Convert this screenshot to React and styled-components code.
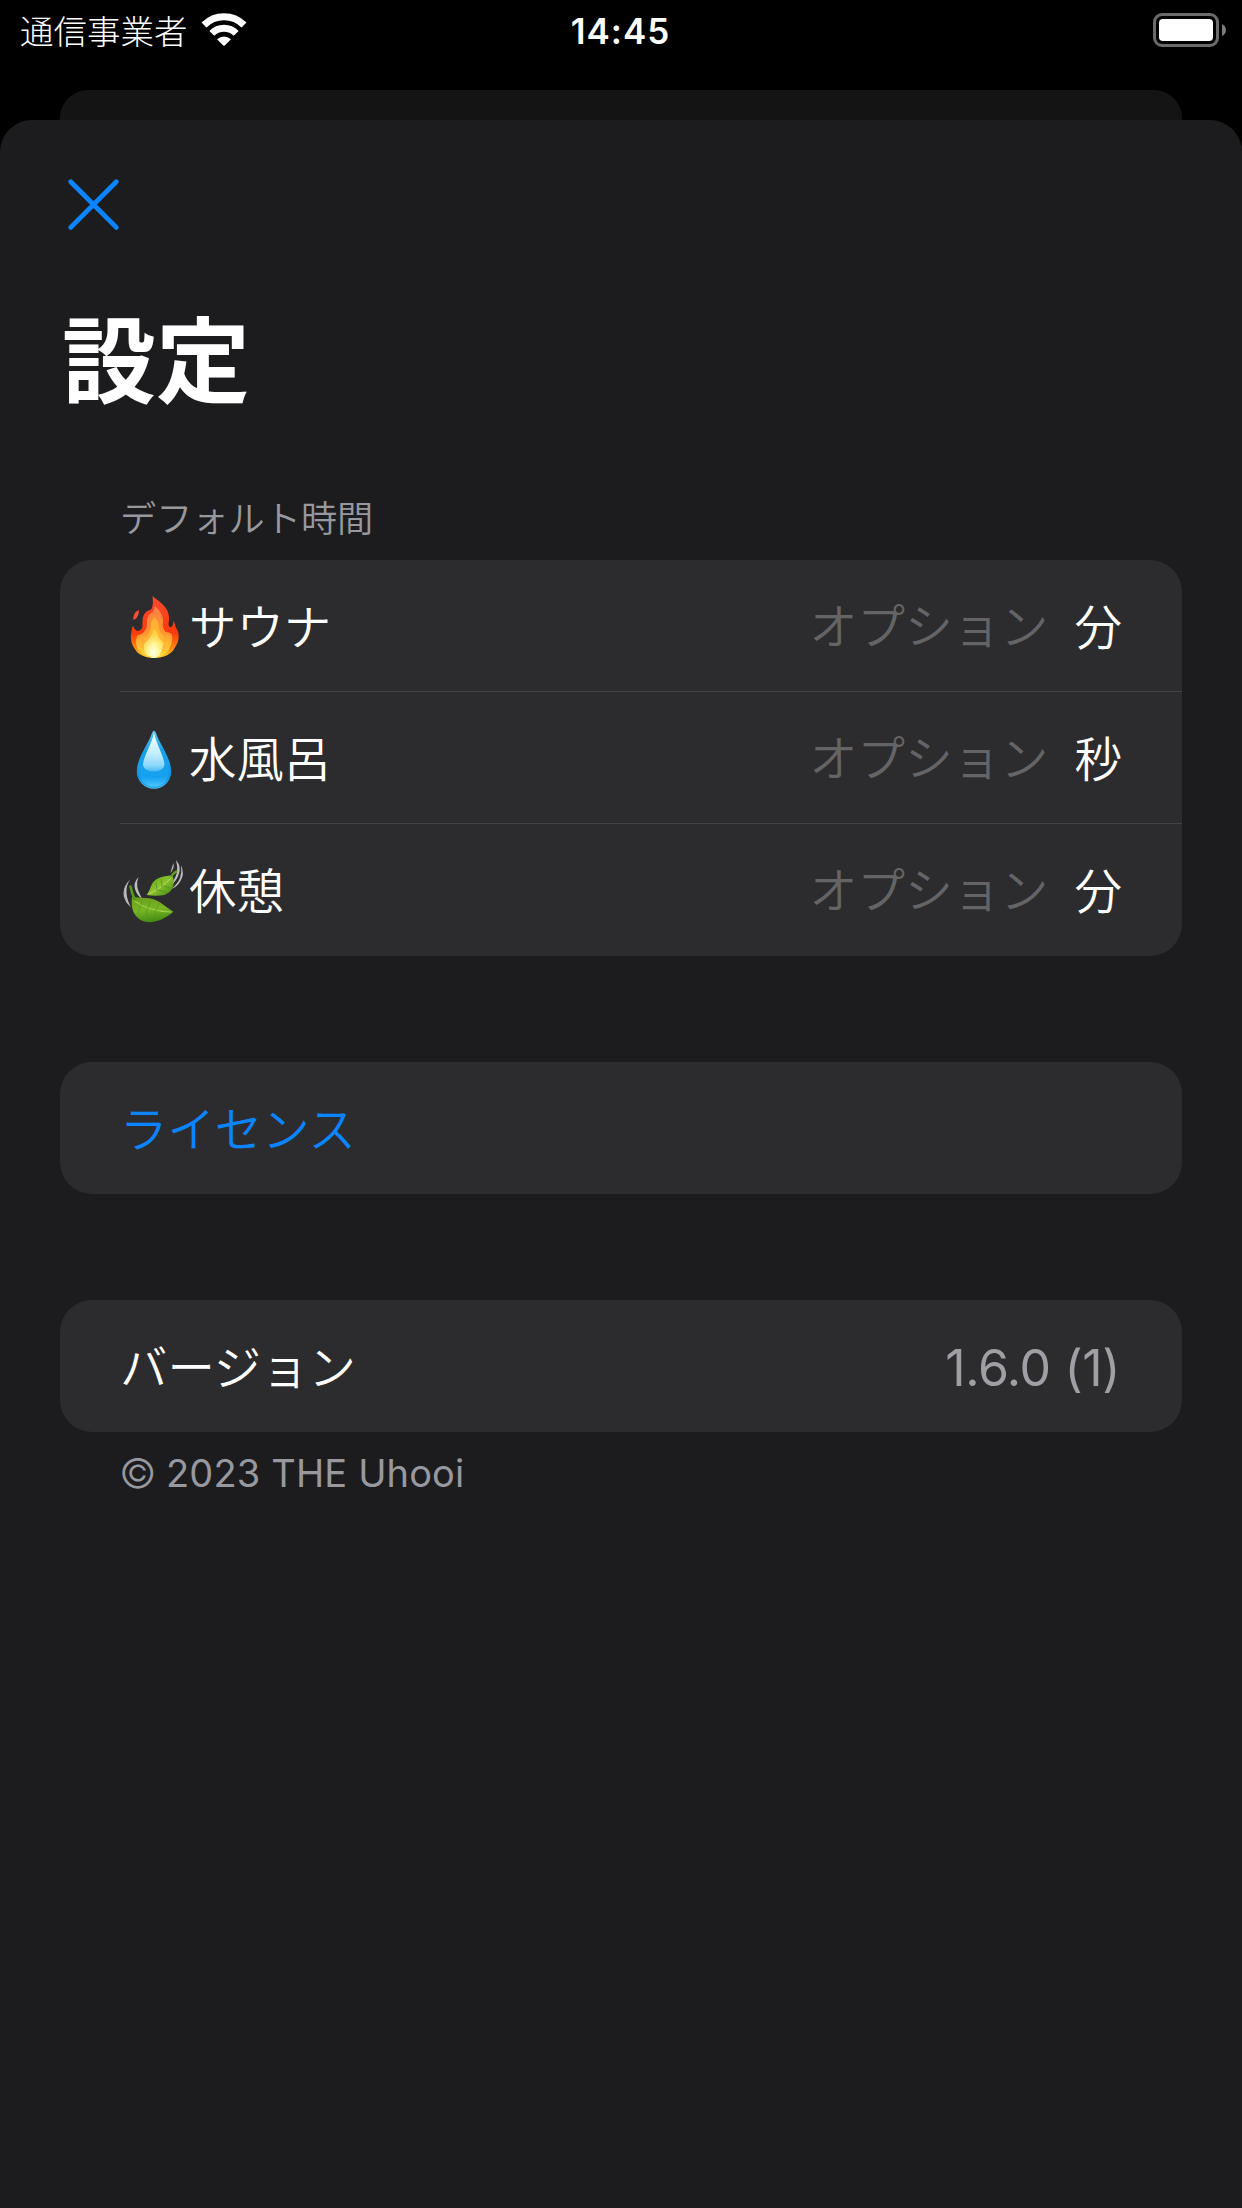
import React from "react";
import styled, { createGlobalStyle } from "styled-components";

const jp = `"Noto Sans CJK JP", sans-serif`;
const latin = `Inter, "Noto Sans CJK JP", sans-serif`;

const GlobalStyle = createGlobalStyle`
  *, *::before, *::after { box-sizing: border-box; }
  html, body { margin: 0; background: #000; }
  body { font-family: ${jp}; color: #fff; font-weight: 350; }
`;

const Screen = styled.div`
  display: flex;
  flex-direction: column;
  width: 1242px;
  height: 2208px;
  overflow: hidden;
  background: #000;
`;

const StatusBar = styled.header`
  display: grid;
  grid-template-columns: 1fr auto 1fr;
  align-items: center;
  height: 60px;
  padding: 0 16px 0 20px;
`;

const Carrier = styled.div`
  display: flex;
  align-items: center;
  gap: 13px;
  font-size: 33.5px;
  font-weight: 300;
  line-height: 60px;
  white-space: nowrap;
`;

const Clock = styled.time`
  padding: 3px 5px 0 0;
  font-family: ${latin};
  font-size: 35px;
  font-weight: 600;
  line-height: 57px;
  letter-spacing: 1px;
`;

const BatterySlot = styled.div`
  display: flex;
  justify-content: flex-end;
`;

const BackSheet = styled.div`
  height: 30px;
  margin: 30px 60px 0;
  border-radius: 28px 28px 0 0;
  background: #141414;
`;

const Sheet = styled.main`
  flex: 1;
  display: flex;
  flex-direction: column;
  padding: 56px 60px 0;
  border-radius: 32px 32px 0 0;
  background: #1c1c1e;
`;

const CloseButton = styled.button`
  display: flex;
  width: 67px;
  height: 57px;
  padding: 0;
  border: 0;
  background: none;
  color: #0a84ff;
`;

const Title = styled.h1`
  margin: 55px 0 0;
  padding-left: 2px;
  font-size: 94px;
  font-weight: 700;
  line-height: 134px;
`;

const SectionHeader = styled.h2`
  margin: 69px 0 0;
  padding: 0 60px;
  height: 69px;
  font-size: 36.2px;
  font-weight: 350;
  line-height: 50px;
  color: #98989f;
`;

const Card = styled.section`
  border-radius: 32px;
  background: #2c2c2e;
  overflow: hidden;
  margin-top: ${(p) => p.$gap || 0}px;
`;

const Row = styled.div`
  display: flex;
  align-items: center;
  height: 132px;
  margin-left: 60px;
  padding-right: 60px;
  border-bottom: ${(p) => (p.$divided ? "1px solid #434346" : "0")};
`;

const Label = styled.span`
  flex: 1;
  font-size: 47.4px;
  line-height: 128px;
  padding-bottom: 2px;
  color: ${(p) => (p.$link ? "#0a84ff" : "#fff")};
`;

const Placeholder = styled.span`
  margin-right: 26px;
  padding-bottom: 4px;
  font-size: 47.8px;
  line-height: 128px;
  color: #646467;
`;

const Unit = styled.span`
  padding-bottom: 2px;
  font-size: 47.6px;
  line-height: 128px;
`;

const Version = styled.span`
  padding: 3px 2px 0 0;
  font-family: ${latin};
  font-size: 50px;
  font-weight: 400;
  line-height: 128px;
  letter-spacing: -0.4px;
  color: #9f9fa6;
`;

const Footer = styled.footer`
  display: flex;
  align-items: center;
  gap: 13px;
  padding: 16px 60px 0;
  font-family: ${latin};
  font-size: 38px;
  font-weight: 400;
  line-height: 50px;
  letter-spacing: 0.15px;
  color: #98989f;
`;

const CopyrightMark = styled.span`
  width: 33px;
  font-size: 41px;
  font-weight: 300;
  text-indent: -1px;
  white-space: nowrap;
`;

const Emoji = styled.svg`
  flex: none;
  width: 69px;
  height: 68px;
`;

const Wifi = () => (
  <svg width="46" height="34" viewBox="201 13 46 34" fill="none" stroke="#fff">
    <path d="M204 25A28.3 28.3 0 0 1 244 25" strokeWidth="7" />
    <path d="M211.8 33.4A17.2 17.2 0 0 1 236.200 33.4" strokeWidth="7" />
    <path d="M217 39.300Q224 33.500 231 39.300L225 45.300Q224 46.300 223 45.300Z" fill="#fff" stroke="none" />
  </svg>
);

const Battery = () => (
  <svg width="73" height="34" viewBox="0 0 73 34">
    <rect x="1.500" y="1.500" width="63" height="31" rx="7.500" fill="none" stroke="#6b6b6b" strokeWidth="3" />
    <rect x="6" y="6" width="54" height="22" rx="4" fill="#fff" />
    <path d="M69 11Q73 13 73 17T69 23Z" fill="#7c7c7c" />
  </svg>
);

const CloseIcon = () => (
  <svg width="67" height="57" viewBox="0 0 67 57" fill="none" stroke="currentColor" strokeWidth="4.800" strokeLinecap="round">
    <path d="M10.700 5.800L56.300 51.400M56.300 5.800L10.700 51.400" />
  </svg>
);

const Fire = () => (
  <Emoji viewBox="0 0 69 68">
    <defs>
      <linearGradient id="fireOuter" x1="0" y1="0" x2="0" y2="1">
        <stop offset="0" stopColor="#f8492f" />
        <stop offset="0.600" stopColor="#fb3a0c" />
        <stop offset="0.850" stopColor="#fd8a10" />
        <stop offset="1" stopColor="#ffd427" />
      </linearGradient>
      <linearGradient id="fireMid" x1="0" y1="0" x2="0" y2="1">
        <stop offset="0" stopColor="#ff7f45" />
        <stop offset="0.500" stopColor="#ff9330" />
        <stop offset="1" stopColor="#ffe13a" />
      </linearGradient>
      <radialGradient id="fireCore" cx="0.500" cy="0.800" r="0.650">
        <stop offset="0" stopColor="#fffff0" />
        <stop offset="0.400" stopColor="#fff79e" />
        <stop offset="1" stopColor="#ffcf3c" />
      </radialGradient>
    </defs>
    <path fill="url(#fireOuter)" d="M32.500 4C37 8 43 11 47 18C50 24 49 28 48.500 33Q50 36.500 52 34.500Q53.700 32 53.500 29Q55 31 55.500 35C57 37 58.700 40 58.700 44Q58.700 50 55.500 54.500L53.500 58C50 63 42 66 34.500 66C26 66 18 62.500 15.500 58L13.500 55C10.500 50 10.500 44 11.500 39Q12 36 13 33.500Q14 37.500 17 39Q21 39 22.500 35C22.500 30 22 24 25.500 20.500Q27.500 18 30.500 18C33.500 15 33 9 32.500 4Z" />
    <path fill="#f45135" d="M19 18Q15 19.500 14 23Q12.800 25.500 13.800 28Q17.500 26 18.200 23Q19.200 20 19 18Z" />
    <path fill="url(#fireMid)" d="M35 14C39 18 43.500 23 43 29Q42 36 45.500 40Q49 40 51.500 42C54 48 50 57 46 61Q40 65.500 34.500 65.500Q26 65 20 60C15 55 15 47 18 43Q23 43 26.500 36C27.500 31 26 26 30 22Q34 20 35 14Z" />
    <path fill="#ffb332" d="M34.500 25Q39 29 38.500 34Q39 40 43.500 44Q47 52 43 59Q39 65 34 65Q26 64 22.500 56Q21 50 24.500 46Q30 42 31 35Q31 29 34.500 25Z" />
    <path fill="url(#fireCore)" d="M34 37Q38 40 38.500 45Q40 48 43.500 50Q43 58 40 63Q37 66 34.500 66Q29 66 25 61Q23 56 24 52Q31 46 34 37Z" />
  </Emoji>
);

const Drop = () => (
  <Emoji viewBox="0 0 69 68">
    <defs>
      <linearGradient id="dropBody" x1="0" y1="0" x2="0" y2="1">
        <stop offset="0" stopColor="#65c4f2" />
        <stop offset="0.350" stopColor="#17a0e6" />
        <stop offset="0.800" stopColor="#16a1f0" />
        <stop offset="1" stopColor="#55ccff" />
      </linearGradient>
      <linearGradient id="dropShine" x1="0" y1="0" x2="0" y2="1">
        <stop offset="0" stopColor="#f6feff" />
        <stop offset="0.550" stopColor="#c2edff" />
        <stop offset="0.850" stopColor="#8bd7fb" />
        <stop offset="1" stopColor="#48b9f5" />
      </linearGradient>
    </defs>
    <path fill="url(#dropBody)" d="M34 6.700Q35 6.700 36 9C40 21 51.200 34 51.200 47.500A17.200 17.200 0 0 1 16.800 47.500C16.800 34 28 21 32 9Q33 6.700 34 6.700Z" />
    <path fill="url(#dropShine)" d="M34 8.500C36 20 44.500 33 44.500 41Q43 47 34 47.500Q24 47 23 41C23 33 32 20 34 8.500Z" />
    <path fill="none" stroke="#0a86d6" strokeWidth="1.400" opacity="0.500" d="M18 42C16.500 53 23 63.500 34 63.500C45 63.500 51.500 53 50 42" />
  </Emoji>
);

const Leaves = () => (
  <Emoji viewBox="0 0 69 68" fill="none" strokeLinecap="round">
    <defs>
      <linearGradient id="leafLow" x1="0.300" y1="0" x2="0.500" y2="1">
        <stop offset="0" stopColor="#69a01c" />
        <stop offset="0.500" stopColor="#7ab525" />
        <stop offset="1" stopColor="#3f8a13" />
      </linearGradient>
      <linearGradient id="leafHigh" x1="0" y1="0" x2="1" y2="1">
        <stop offset="0" stopColor="#5a9f1a" />
        <stop offset="0.500" stopColor="#8cc22e" />
        <stop offset="1" stopColor="#3d8412" />
      </linearGradient>
    </defs>
    <g fill="#bdbdbf">
      <path d="M10.500 23Q3 30 5 40Q6.500 48 11 51.500Q7 44 6.500 37Q6 29 10.500 23Z" />
      <path d="M8 26Q2 33 4 41Q5.500 46 8.500 49Q5 42 4.800 37Q4.500 31 8 26Z" />
      <path d="M18.500 21Q13 27 15 33Q17 40 22 42.500Q18 35 17.300 31Q16.500 26 18.500 21Z" />
      <path d="M56 4Q62 11 58.500 19Q56 26 50 30Q55.500 22 56.800 17Q58 11 56 4Z" />
      <path d="M61 9Q65 18 60.500 25Q57 31 51.500 33Q58 27 60 22Q62 16 61 9Z" />
      <path d="M53.500 7Q54.500 12 50.500 17Q51.500 12 53.500 7Z" />
    </g>
    <path fill="url(#leafLow)" d="M12 41Q18 41.500 25 42C38 42 44 50 53.500 55.800C48 60 43 64 35 65.500C27 67.500 20 65 16 60C12 55 11 48 12 41Z" />
    <path stroke="#579a1a" strokeWidth="2.600" d="M10.500 30.500Q12 38 15 44" />
    <path stroke="#a0cd4c" strokeWidth="1.100" d="M14.500 45Q28 55 51 56" />
    <path stroke="#5b981e" strokeWidth="1" opacity="0.800" d="M21 49L22 44M28 52L30 45M36 54L39 48M20 50L18 58M27 53L26 63M35 55L36 63" />
    <path fill="url(#leafHigh)" d="M26.700 39Q30 34 31.500 29C34 23 42 19.500 52 19.500Q54.500 23 53.500 29Q52 36 44.500 39Q36 40.500 26.700 39Z" />
    <path stroke="#63a01f" strokeWidth="2.300" d="M50.500 22Q53 17 56.500 15.500" />
    <path stroke="#bfdc62" strokeWidth="1" d="M29 38Q42 32 51.500 21.500" />
    <path stroke="#4f8c18" strokeWidth="1" opacity="0.700" d="M37 34L36 27M42 31L41.500 24M38 34L45 36M43.500 30L50 32" />
  </Emoji>
);

const defaults = [
  { icon: Fire, label: "サウナ", unit: "分" },
  { icon: Drop, label: "水風呂", unit: "秒" },
  { icon: Leaves, label: "休憩", unit: "分" },
];

export default function App() {
  return (
    <Screen lang="ja">
      <GlobalStyle />
      <StatusBar>
        <Carrier>
          <span>通信事業者</span>
          <Wifi />
        </Carrier>
        <Clock>14:45</Clock>
        <BatterySlot>
          <Battery />
        </BatterySlot>
      </StatusBar>
      <BackSheet />
      <Sheet>
        <CloseButton aria-label="閉じる">
          <CloseIcon />
        </CloseButton>
        <Title>設定</Title>
        <SectionHeader>デフォルト時間</SectionHeader>
        <Card>
          {defaults.map(({ icon: Icon, label, unit }, i) => (
            <Row key={label} $divided={i < defaults.length - 1}>
              <Icon />
              <Label>{label}</Label>
              <Placeholder>オプション</Placeholder>
              <Unit>{unit}</Unit>
            </Row>
          ))}
        </Card>
        <Card $gap={106}>
          <Row>
            <Label $link>ライセンス</Label>
          </Row>
        </Card>
        <Card $gap={106}>
          <Row>
            <Label>バージョン</Label>
            <Version>1.6.0 (1)</Version>
          </Row>
        </Card>
        <Footer>
          <CopyrightMark>©</CopyrightMark>
          <span>2023 THE Uhooi</span>
        </Footer>
      </Sheet>
    </Screen>
  );
}
